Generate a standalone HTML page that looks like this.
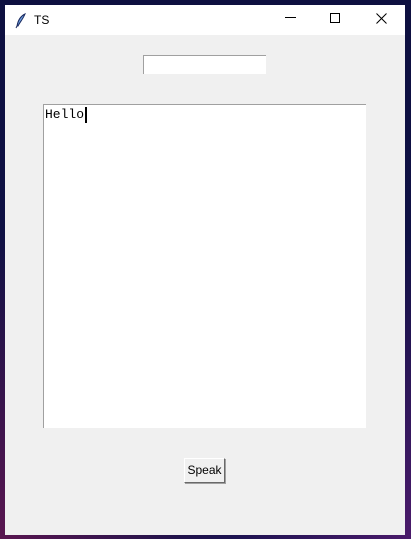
<!DOCTYPE html>
<html><head><style>
html,body{margin:0;padding:0;}
body{width:411px;height:539px;overflow:hidden;position:relative;
background:radial-gradient(ellipse at 0% 100%,#5a1650 0%,transparent 40%),radial-gradient(ellipse at 100% 100%,#4a1a6a 0%,transparent 40%),linear-gradient(#0e1040,#10124a);
font-family:"Liberation Sans",sans-serif;}
.win{position:absolute;left:5px;top:5px;width:400px;height:530px;background:#f0f0f0;}
.title{position:absolute;left:0;top:0;width:400px;height:30px;background:#fff;}
.title .t{position:absolute;left:29px;top:8px;font-size:12px;color:#000;}
.abs{position:absolute;}
.entry{left:138px;top:50px;width:122px;height:18px;background:#fff;border-top:1px solid #a0a0a0;border-left:1px solid #a0a0a0;}
.text{left:38px;top:99px;width:322px;height:323px;background:#fff;border-top:1px solid #a0a0a0;border-left:1px solid #a0a0a0;}
.text span{position:absolute;left:1px;top:2px;font-family:"Liberation Mono",monospace;font-size:13px;color:#000;}
.cur{position:absolute;left:41px;top:2px;width:2px;height:16px;background:#000;}
.btn{left:179px;top:453px;width:39px;height:23px;background:#f0f0f0;border:1px solid;border-color:#fff #696969 #696969 #fff;box-shadow:1px 1px 0 #a0a0a0;font-size:12px;text-align:center;line-height:23px;}
</style></head><body>
<div class="win">
 <div class="title">
  <svg class="abs" style="left:10px;top:8px" width="12" height="16" viewBox="0 0 12 16"><path d="M10 1 C6 3 3 7 2 13 L3 13 C5 9 8 6 10 1Z" fill="#6fa0e0" stroke="#1a2a60" stroke-width="1"/><path d="M2 13 L1 15" stroke="#1a2a60"/></svg>
  <div class="t">TS</div>
  <svg class="abs" style="left:280px;top:12px" width="12" height="2"><rect width="11" height="1" fill="#000"/></svg>
  <svg class="abs" style="left:325px;top:8px" width="11" height="11"><rect x="0.5" y="0.5" width="9" height="9" fill="none" stroke="#000"/></svg>
  <svg class="abs" style="left:371px;top:8px" width="11" height="11"><path d="M0.5 0.5 L10.5 10.5 M10.5 0.5 L0.5 10.5" stroke="#000"/></svg>
 </div>
 <div class="abs entry"></div>
 <div class="abs text"><span>Hello</span><div class="cur"></div></div>
 <div class="abs btn">Speak</div>
</div>
</body></html>
